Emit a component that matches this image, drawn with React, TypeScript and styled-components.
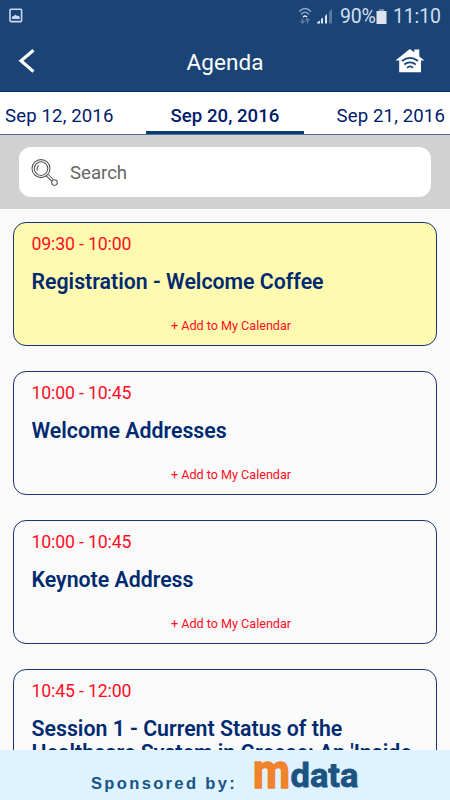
import React from 'react';
import styled, { createGlobalStyle } from 'styled-components';

const GlobalStyle = createGlobalStyle`
  * { box-sizing: border-box; }
  body { margin: 0; font-family: Roboto, "Liberation Sans", sans-serif; background: #fafafa; }
  button { font: inherit; border: 0; background: none; padding: 0; }
`;

const Screen = styled.main`
  width: 450px;
  height: 800px;
  display: flex;
  flex-direction: column;
  overflow: hidden;
  background: #fafafa;
`;

const StatusBar = styled.div`
  height: 32px;
  flex: none;
  display: flex;
  align-items: center;
  justify-content: space-between;
  padding: 0 10px 0 7px;
  background: #194475;
  color: #d3dfef;
`;

const StatusGroup = styled.div`
  display: flex;
  align-items: center;
`;

const StatusText = styled.span<{ $width: number; $gap: number }>`
  width: ${(p) => p.$width}px;
  margin-left: ${(p) => p.$gap}px;
  padding-top: 1px;
  font-size: 19.5px;
  letter-spacing: -0.15px;
  line-height: 32px;
  white-space: nowrap;
`;

const Header = styled.header`
  height: 60px;
  flex: none;
  display: grid;
  grid-template-columns: 60px 1fr 60px;
  align-items: center;
  background: #194475;
  border-bottom: 1px solid #063078;
  color: #fff;
`;

const Heading = styled.h1`
  margin: 0;
  text-align: center;
  font-size: 22.5px;
  font-weight: 400;
  letter-spacing: 0.05px;
  line-height: 60px;
`;

const IconButton = styled.button`
  display: flex;
  height: 59px;
  align-items: center;
  color: inherit;
`;

const HomeButton = styled(IconButton)`
  padding-left: 5px;
`;

const Tabs = styled.nav`
  height: 43px;
  flex: none;
  display: flex;
  justify-content: space-between;
  background: #fff;
  border-bottom: 1px solid #536a9b;
`;

const Tab = styled.button<{ $active?: boolean }>`
  width: ${(p) => (p.$active ? 158 : 146)}px;
  height: 42px;
  display: block;
  padding-top: 4px;
  border-bottom: 3px solid ${(p) => (p.$active ? '#063c73' : 'transparent')};
  color: #001a6c;
  font-size: 18.6px;
  font-weight: ${(p) => (p.$active ? 500 : 400)};
  letter-spacing: ${(p) => (p.$active ? 0.03 : 0.13)}px;
  line-height: 41px;
  text-align: center;
  white-space: nowrap;
  &:first-child { text-align: left; padding-left: 5px; }
  &:last-child { text-align: right; padding-right: 5px; }
`;

const SearchArea = styled.div`
  height: 74px;
  flex: none;
  padding: 12px 19px 12px;
  background: #d1d1d1;
`;

const SearchBox = styled.div`
  height: 50px;
  display: flex;
  align-items: center;
  gap: 11px;
  padding: 1px 0 0 12px;
  border-radius: 12px;
  background: #fff;
  color: #666;
  font-size: 18.6px;
`;

const Agenda = styled.section`
  flex: 1;
  min-height: 0;
  overflow: hidden;
  display: flex;
  flex-direction: column;
  gap: 24.85px;
  padding: 13px 13px 0;
`;

const Card = styled.article<{ $highlight?: boolean }>`
  min-height: 124px;
  flex: none;
  display: flex;
  flex-direction: column;
  padding: 10px 17.5px 0;
  border: 1.3px solid #173574;
  border-radius: 13px;
  background: ${(p) => (p.$highlight ? '#fffab0' : '#fafafa')};
`;

const Time = styled.time`
  color: #ff0d24;
  font-size: 17.7px;
  letter-spacing: -0.15px;
  line-height: 22px;
`;

const Title = styled.h2`
  margin: 15px 0 0;
  color: #002a70;
  font-size: 21.3px;
  font-weight: 600;
  line-height: 24px;
  white-space: pre-line;
`;

const AddButton = styled.button`
  margin-top: 23px;
  align-self: center;
  padding-left: 12px;
  color: #ff0d24;
  font-size: 12.6px;
  line-height: 18px;
`;

const Sponsor = styled.footer`
  height: 50px;
  flex: none;
  display: flex;
  padding-left: 91px;
  background: #dff2ff;
`;

const SponsorLabel = styled.span`
  width: 161px;
  padding-top: 23px;
  color: #175487;
  font: bold 16.5px/20px "Liberation Sans", Arial, sans-serif;
  letter-spacing: 2.35px;
  white-space: nowrap;
`;

const LogoText = styled.text`
  font-family: Roboto, "Liberation Sans", sans-serif;
  font-weight: 700;
  stroke-linejoin: round;
`;

const sessions = [
  { time: '09:30 - 10:00', title: 'Registration - Welcome Coffee', highlight: true },
  { time: '10:00 - 10:45', title: 'Welcome Addresses' },
  { time: '10:00 - 10:45', title: 'Keynote Address' },
  { time: '10:45 - 12:00', title: "Session 1 - Current Status of the\nHealthcare System in Greece: An 'Inside" },
];

const PictureIcon = () => (
  <svg width="18" height="18" viewBox="0 0 18 18" fill="none">
    <rect x="3" y="2.2" width="11.6" height="12.4" rx="1" stroke="#cbd8ee" strokeWidth="1.6" />
    <path d="M5 12V9.5l2-.5 1-1.5 2 1.2 2 .3.8 1.5V12z" fill="#cbd8ee" />
  </svg>
);

const SignalIcons = () => (
  <svg width="38" height="20" viewBox="0 0 38 20" fill="none">
    <g strokeWidth="1.4">
      <path d="M0 5.5c4-4 8-4 12 0M2 8.3c3-3 5-3 8 0" stroke="#8fa9c7" />
      <path d="M4 11c1.5-1.5 2.5-1.5 4 0" stroke="#e1eaf5" />
      <path d="M3.5 17v-4.5m-2 2.5 2 2 2-2M8.5 12.5v5m-2-3 2-2 2 2" stroke="#5d7ba3" />
    </g>
    <path d="M18 17.5v-1l3-2v3zm4 0v-4.5l2-1.5v6zm4 0V10l2-2v9.5z" fill="#dce6f3" />
    <path d="M30 17.5V5.8L33 3v14.5z" fill="#58779f" />
  </svg>
);

const BatteryIcon = () => (
  <svg width="12" height="17" viewBox="0 0 12 17">
    <path d="M3 1h5v2h2.5v13H.5V3H3z" fill="#dce5ef" />
    <path d="M3 1h5v2H3z" fill="#748aac" />
  </svg>
);

const BackIcon = () => (
  <svg width="45" height="30" viewBox="0 0 45 30" fill="none">
    <path d="M33.5 3.2 21 13.8 33.5 24.6" stroke="white" strokeWidth="3.2" />
  </svg>
);

const HomeIcon = () => (
  <svg width="32" height="30" viewBox="0 0 32 30" fill="none">
    <path d="M.5 13.5 14.8 2l4.5 3.3V2.5h5v7l5.2 4H26v11.7H4.2V13.5z" fill="#fff" />
    <path d="M7 14c5-4 11-4 16 0M9.3 17.5c4-3 7.5-3 11.5 0M12 20.8c2-2 4-2 6 0" stroke="#194475" strokeWidth="1.7" />
  </svg>
);

const SearchIcon = () => (
  <svg width="28" height="28" viewBox="0 0 28 28" fill="none" stroke="#555" strokeWidth="1.05">
    <circle cx="10" cy="9.6" r="9" />
    <circle cx="10" cy="9.6" r="6.8" />
    <path d="M6.5 11.6c-1-2 0-4 1.2-5M15.3 16.8l5.4 5.4M17.3 15.5l5 5" />
    <circle cx="23.5" cy="23.6" r="2.8" />
  </svg>
);

const SponsorLogo = () => (
  <svg width="110" height="50" viewBox="0 0 110 50" aria-label="mdata">
    <LogoText x="1" y="38" fontSize="49" textLength="37" lengthAdjust="spacingAndGlyphs" fill="#f0832b" stroke="#f0832b" strokeWidth="1.6">m</LogoText>
    <LogoText x="38.5" y="37.3" fontSize="33.5" textLength="68" lengthAdjust="spacingAndGlyphs" fill="#1b5381" stroke="#1b5381" strokeWidth="0.8">data</LogoText>
  </svg>
);

export default function App() {
  return (
    <>
      <GlobalStyle />
      <Screen>
        <StatusBar>
          <PictureIcon />
          <StatusGroup>
            <SignalIcons />
            <StatusText $width={36} $gap={3}>90%</StatusText>
            <BatteryIcon />
            <StatusText $width={47} $gap={5}>11:10</StatusText>
          </StatusGroup>
        </StatusBar>
        <Header>
          <IconButton aria-label="Back"><BackIcon /></IconButton>
          <Heading>Agenda</Heading>
          <HomeButton aria-label="Home"><HomeIcon /></HomeButton>
        </Header>
        <Tabs>
          <Tab>Sep 12, 2016</Tab>
          <Tab $active>Sep 20, 2016</Tab>
          <Tab>Sep 21, 2016</Tab>
        </Tabs>
        <SearchArea>
          <SearchBox><SearchIcon />Search</SearchBox>
        </SearchArea>
        <Agenda>
          {sessions.map((session) => (
            <Card key={session.title} $highlight={session.highlight}>
              <Time>{session.time}</Time>
              <Title>{session.title}</Title>
              <AddButton>+ Add to My Calendar</AddButton>
            </Card>
          ))}
        </Agenda>
        <Sponsor>
          <SponsorLabel>Sponsored by:</SponsorLabel>
          <SponsorLogo />
        </Sponsor>
      </Screen>
    </>
  );
}
